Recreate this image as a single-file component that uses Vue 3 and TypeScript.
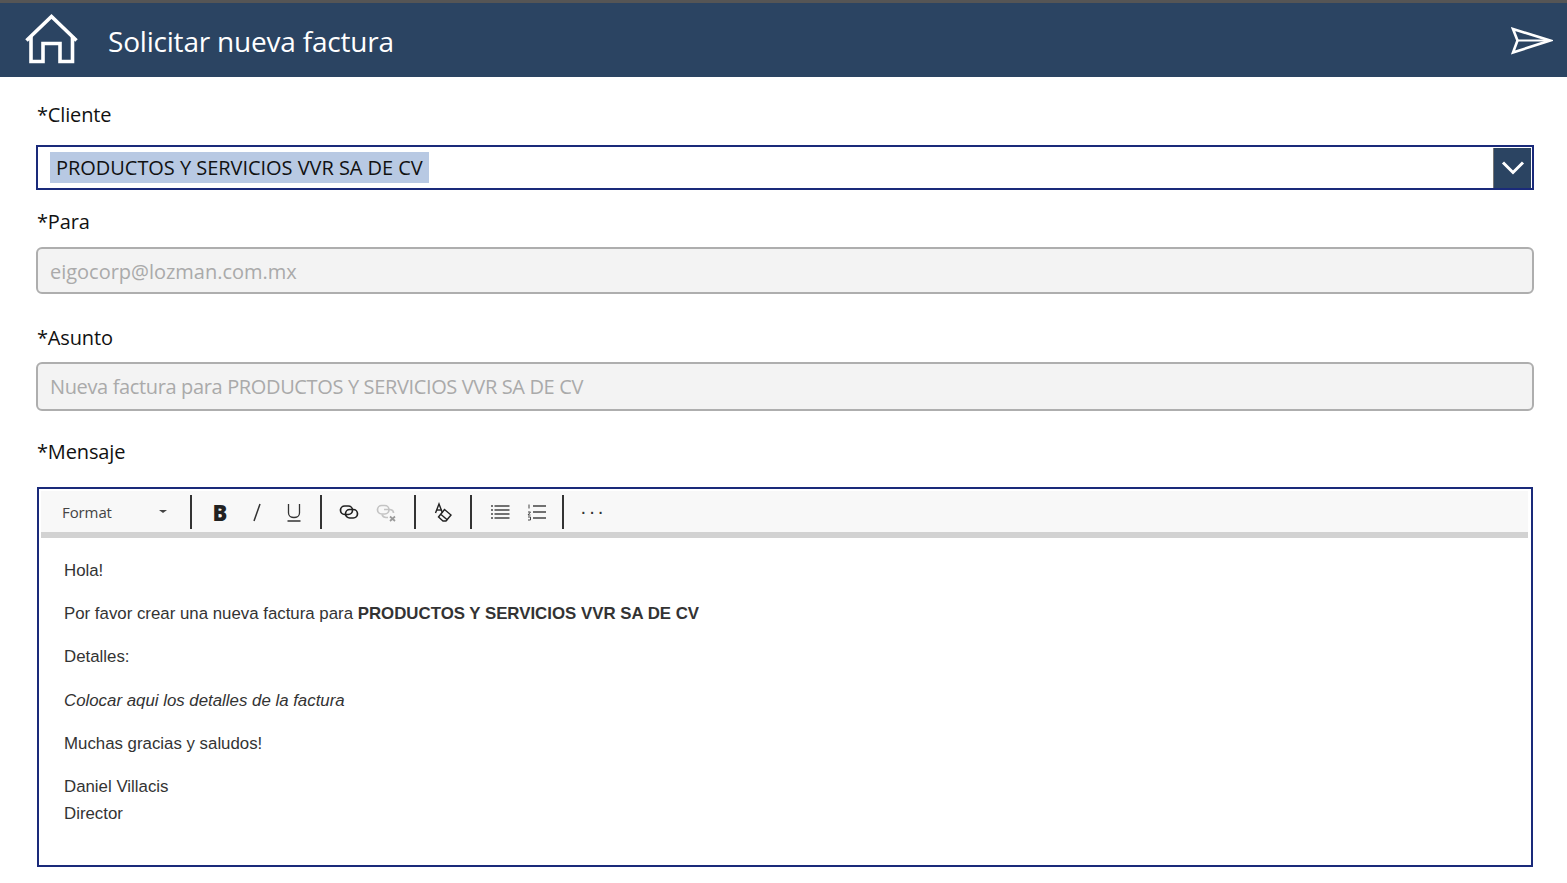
<script setup lang="ts">
const title = 'Solicitar nueva factura'
const client = 'PRODUCTOS Y SERVICIOS VVR SA DE CV'
</script>

<template>
  <div class="page">
    <header class="bar">
      <svg class="home" viewBox="0 0 54 50" fill="none" stroke="#fff" stroke-width="3.6">
        <path d="M1.5 26.5 L26.5 2.5 L51.5 26.5" stroke-linejoin="miter" />
        <path d="M6 22 V47.5 H18 V29.5 H35 V47.5 H47.5 V22" />
      </svg>
      <h1 class="title">{{ title }}</h1>
      <svg class="send" viewBox="0 0 42 28" fill="none" stroke="#fff" stroke-width="2.6">
        <path d="M2 2 L39 13.5 L2 25.5 L6.5 13.5 Z" stroke-linejoin="miter" />
        <path d="M6.5 13.5 H39" stroke-width="2" />
      </svg>
    </header>

    <main class="form">
      <label class="label first">*Cliente</label>
      <div class="select">
        <span class="selected">{{ client }}</span>
        <span class="chev">
          <svg viewBox="0 0 26 16" width="26" height="16" fill="none" stroke="#fff" stroke-width="3">
            <path d="M3 2.5 L13 12.5 L23 2.5" />
          </svg>
        </span>
      </div>

      <label class="label para">*Para</label>
      <div class="input email">eigocorp@lozman.com.mx</div>

      <label class="label asunto">*Asunto</label>
      <div class="input asunto-input">Nueva factura para {{ client }}</div>

      <label class="label mensaje">*Mensaje</label>
      <section class="editor">
        <div class="toolbar">
          <span class="format">Format</span>
          <span class="caret"></span>
          <span class="sep s1"></span>
          <button class="tool b">B</button>
          <svg class="icon" viewBox="0 0 20 20" stroke="#333" stroke-width="1.5" fill="none"><path d="M13 2 L7 19" /></svg>
          <svg class="icon" viewBox="0 0 20 20" stroke="#333" stroke-width="1.3" fill="none"><path d="M4.5 2 V11 C4.5 17 15.5 17 15.5 11 V2 M3.5 19 H16.5" /></svg>
          <span class="sep s2"></span>
          <svg class="icon" viewBox="0 0 20 20" stroke="#222" stroke-width="1.7" fill="none"><rect x="1.5" y="4" width="12" height="8.5" rx="4.2" /><rect x="6.5" y="7.5" width="12" height="8.5" rx="4.2" /></svg>
          <svg class="icon" viewBox="0 0 20 20" stroke="#c4c4c4" stroke-width="1.7" fill="none"><rect x="1.5" y="3.5" width="11.5" height="8.5" rx="4.2" /><path d="M8 7.5 H13 C16 7.5 17.5 9 17.5 11 M12 15.5 H10 C7.5 15.5 6.5 14 6 12.5" /><path d="M14 14.5 L19 19 M19 14.5 L14 19" stroke="#9a9a9a" /></svg>
          <span class="sep s3"></span>
          <svg class="icon" viewBox="0 0 20 20" fill="none" stroke="#222" stroke-width="1.4"><path d="M2.5 11 L6 2 L9.5 11" /><path d="M4 8 H8" /><path d="M11.5 7.5 L18 13 L13 19 H10 L5.5 15 Z" /><path d="M8 12.5 L14.5 18" /></svg>
          <span class="sep s4"></span>
          <svg class="icon" viewBox="0 0 20 20" stroke="#444" stroke-width="1.4" fill="none"><path d="M4.5 4 H19.5 M4.5 8 H19.5 M4.5 12 H19.5 M4.5 16 H19.5" /><path d="M1 4 H3 M1 8 H3 M1 12 H3 M1 16 H3" /></svg>
          <svg class="icon" viewBox="0 0 20 20" stroke="#444" stroke-width="1.4" fill="none"><path d="M6 4 H19 M6 10 H19 M6 16 H19" /><path d="M2 2.5 V6.5 M1 10 H3.5 L1 13 H3.5 M1 15 H3.5 V18 H1" stroke-width="1" /></svg>
          <span class="sep s5"></span>
          <span class="more">···</span>
        </div>
        <div class="body">
          <p>Hola!</p>
          <p>Por favor crear una nueva factura para <strong>{{ client }}</strong></p>
          <p>Detalles:</p>
          <p><em>Colocar aqui los detalles de la factura</em></p>
          <p>Muchas gracias y saludos!</p>
          <p>Daniel Villacis<br />Director</p>
        </div>
      </section>
    </main>
  </div>
</template>

<style>
html, body { margin: 0; background: #fff; }
</style>

<style scoped>
.page {
  width: 1567px;
  height: 883px;
  overflow: hidden;
  font-family: "Open Sans", "Noto Sans", sans-serif;
  color: #111;
  background: #fff;
}
.bar {
  height: 74px;
  border-top: 3px solid #555;
  background: #2b4462;
  display: flex;
  align-items: center;
}
.home { width: 54px; height: 50px; margin-left: 25px; margin-top: -2px; }
.title {
  margin: 1px 0 0 29px;
  font-size: 28px;
  font-weight: 400;
  color: #fff;
  letter-spacing: -0.2px;
}
.send { width: 42px; height: 28px; margin-left: auto; margin-right: 14px; margin-top: 1px; }
.form { padding: 0 33px 0 36px; }
.label { display: block; font-size: 20px; line-height: 28px; letter-spacing: -0.15px; margin-left: 1px; }
.first { padding-top: 24px; }
.select {
  margin-top: 16px;
  height: 41px;
  border: 2px solid #1a2a7a;
  background: #fff;
  display: flex;
  align-items: center;
  justify-content: space-between;
  padding-left: 12px;
}
.selected {
  background: #b8c9e3;
  height: 31px;
  line-height: 31px;
  padding: 0 6px;
  font-size: 20px;
  letter-spacing: -0.04px;
  color: #111;
}
.chev {
  width: 38px;
  height: 40px;
  background: #2b4462;
  margin-right: 1px;
  display: flex;
  align-items: center;
  justify-content: center;
  border-left: 1px solid #777;
  box-sizing: border-box;
}
.para { margin-top: 18px; }
.input {
  margin-top: 11px;
  height: 43px;
  line-height: 45px;
  border: 2px solid #aeaeae;
  border-radius: 6px;
  background: #f3f3f3;
  color: #aaa;
  padding-left: 12px;
  font-size: 20px;
}
.email { letter-spacing: -0.02px; }
.asunto { margin-top: 30px; }
.asunto-input { margin-top: 10px; height: 45px; line-height: 46px; letter-spacing: -0.36px; }
.mensaje { margin-top: 27px; }
.editor {
  margin: 21px 1px 0 1px;
  height: 374px;
  border: 2px solid #1a2a7a;
  background: #fff;
  padding: 2px 3px 0 2px;
}
.toolbar {
  height: 41px;
  border-bottom: 6px solid #d2d2d2;
  background: #f8f8f8;
  display: flex;
  align-items: center;
  padding-left: 21px;
}
.format { font-size: 15px; color: #444; width: 97px; letter-spacing: -0.1px; }
.caret {
  width: 0;
  height: 0;
  border-left: 4px solid transparent;
  border-right: 4px solid transparent;
  border-top: 3px solid #444;
}
.sep { width: 2px; height: 34px; background: #333; display: block; }
.s1 { margin-left: 23px; margin-right: 18px; }
.s2 { margin-left: -1px; margin-right: 17px; }
.s3 { margin-left: 1px; margin-right: 17px; }
.s4 { margin-left: 0; margin-right: 18px; }
.s5 { margin-left: -2px; margin-right: 16px; }
.tool {
  width: 20px;
  padding: 0;
  border: 0;
  background: none;
  font-family: "Open Sans", sans-serif;
  font-weight: 800;
  font-size: 22px;
  line-height: 24px;
  color: #222;
  margin-right: 17px;
}
.icon { width: 20px; height: 20px; margin-right: 17px; }
.more { font-family: "Liberation Sans", sans-serif; font-size: 20px; color: #333; letter-spacing: 2px; line-height: 20px; margin-top: -2px; }
.body {
  padding: 19px 0 0 23px;
  font-family: "Liberation Sans", Arial, sans-serif;
  font-size: 16.84px;
  line-height: 27px;
  color: #333;
}
.body p { margin: 0 0 16.2px; }
</style>
